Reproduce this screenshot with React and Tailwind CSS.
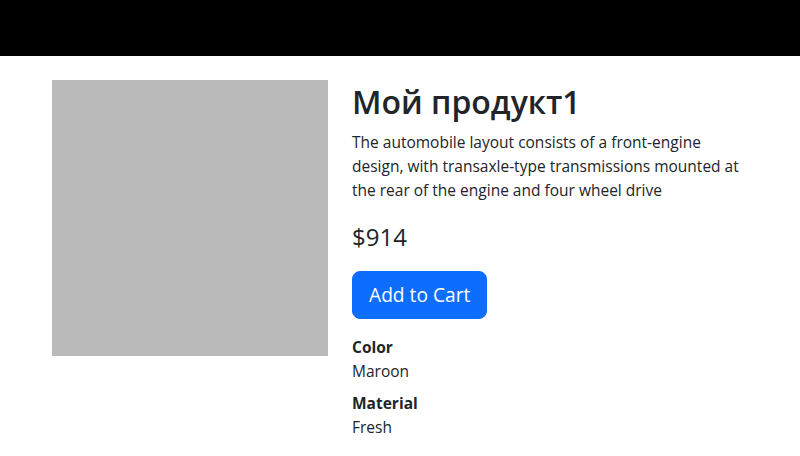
import React from 'react';

const product = {
  title: 'Мой продукт1',
  description:
    'The automobile layout consists of a front-engine design, with transaxle-type transmissions mounted at the rear of the engine and four wheel drive',
  price: 914,
  attributes: [
    { name: 'Color', value: 'Maroon' },
    { name: 'Material', value: 'Fresh' },
  ],
};

const Navbar = () => <nav className="h-14 w-full bg-black" />;

const ProductDetails = ({ item }) => (
  <div className="mx-auto mt-6 flex w-[720px] px-3">
    {/* Image placeholder */}
    <div className="w-[300px] shrink-0 pr-6">
      <div className="h-[276px] w-[276px] bg-[#bababa]" />
    </div>

    {/* Info column */}
    <div className="w-[396px]">
      <h2 className="mb-2 pt-[3px] text-[32px] font-semibold leading-[1.2]">{item.title}</h2>
      <p className="mb-4 pt-px text-[15.5px] leading-6">{item.description}</p>
      <p className="mb-[19px] pt-[5px] text-[24px] leading-[1.2]">${item.price}</p>
      <button className="rounded-lg border border-[#0d6efd] bg-[#0d6efd] px-4 py-2 text-[19.2px] leading-[30px] text-white">
        Add to Cart
      </button>
      <div className="mt-4 flex flex-col gap-2 text-[15.5px] leading-6">
        {item.attributes.map((attr) => (
          <div key={attr.name}>
            <div className="font-bold">{attr.name}</div>
            <div>{attr.value}</div>
          </div>
        ))}
      </div>
    </div>
  </div>
);

export default function App() {
  return (
    <div className="min-h-screen bg-white text-[#212529] font-['Open_Sans',sans-serif]">
      <Navbar />
      <ProductDetails item={product} />
    </div>
  );
}
